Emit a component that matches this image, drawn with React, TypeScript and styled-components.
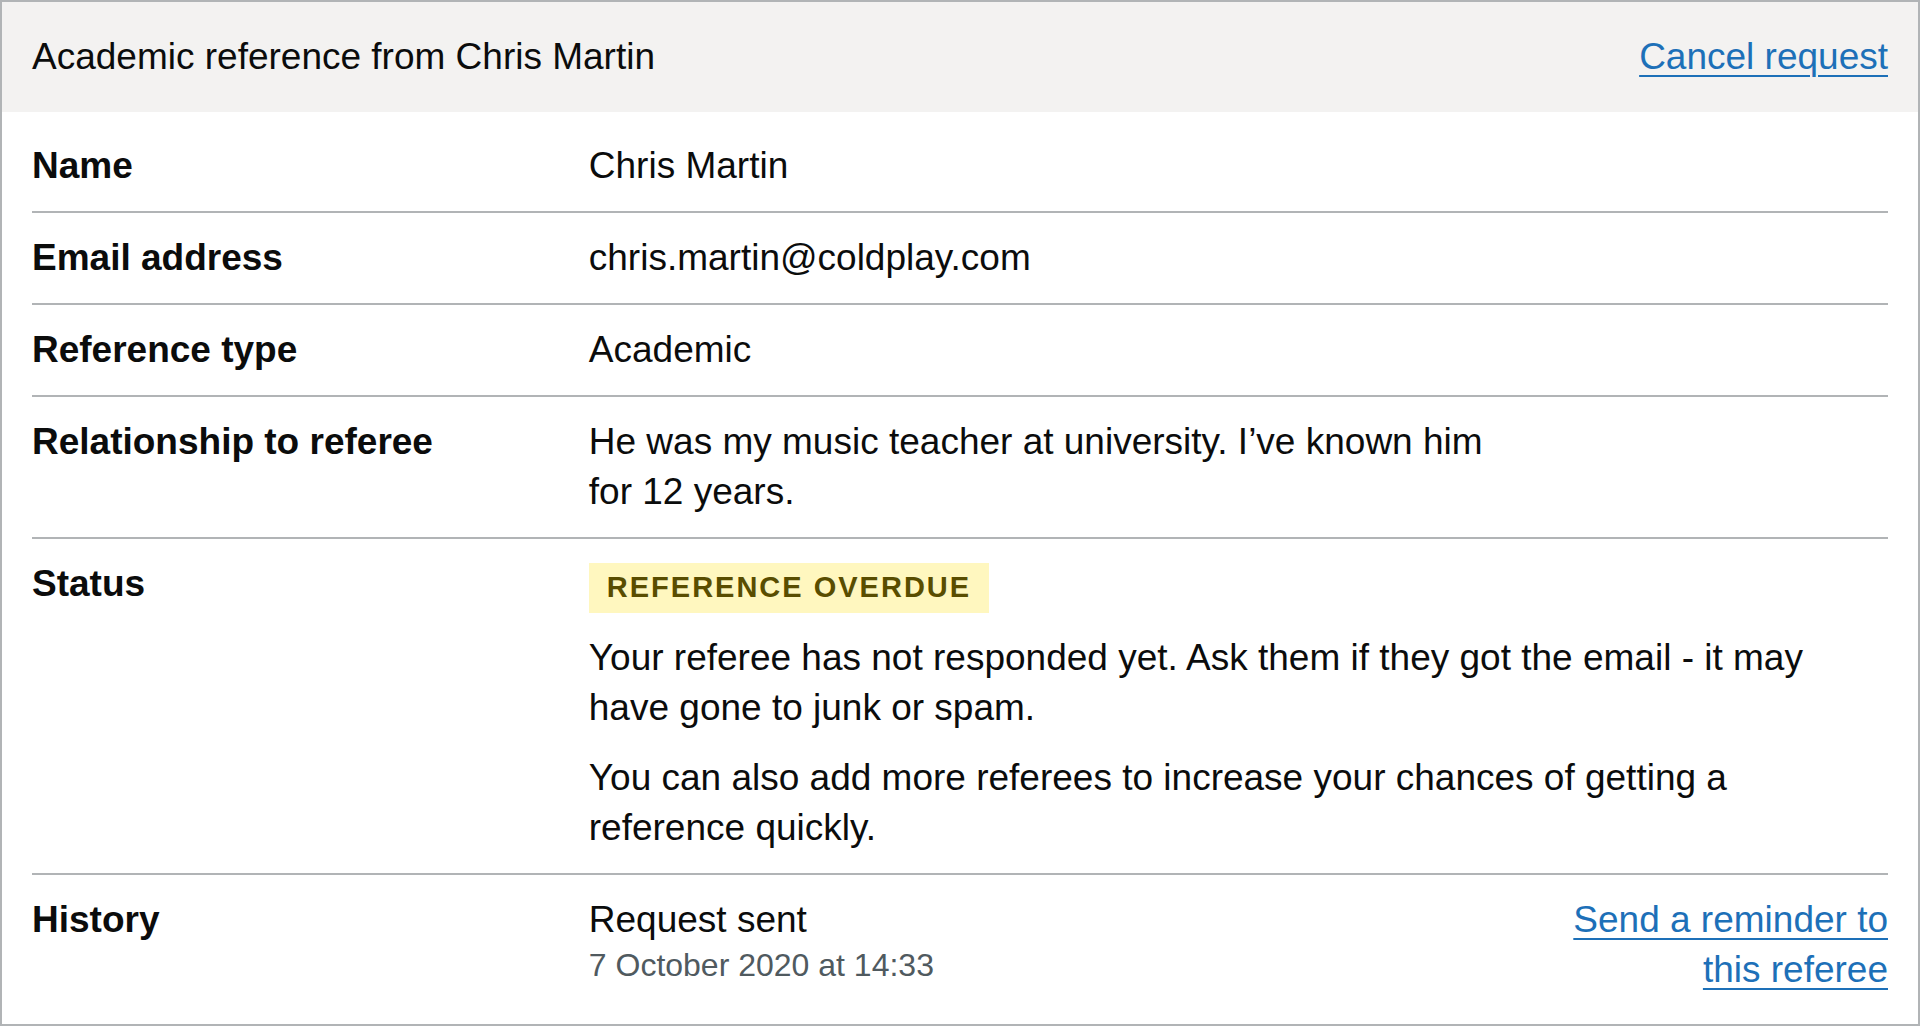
import * as React from 'react';
import styled, { createGlobalStyle } from 'styled-components';

const GlobalStyle = createGlobalStyle`
  html, body {
    margin: 0;
    padding: 0;
    background: #ffffff;
  }
  body {
    font-family: "Liberation Sans", Arial, sans-serif;
    color: #0b0c0c;
    -webkit-font-smoothing: antialiased;
  }
`;

const Card = styled.section`
  border: 2px solid #b1b4b6;
  background: #ffffff;
`;

const CardHeader = styled.header`
  display: flex;
  justify-content: space-between;
  align-items: baseline;
  padding: 30px;
  background: #f3f2f1;
`;

const CardTitle = styled.h2`
  margin: 0;
  font-size: 37px;
  line-height: 50px;
  font-weight: 400;
`;

const Link = styled.a`
  color: #1d70b8;
  font-size: 37px;
  line-height: 50px;
  text-decoration: underline;
  text-decoration-thickness: 2px;
  text-underline-offset: 0.15em;
  cursor: pointer;
`;

const CardContent = styled.div`
  padding: 9px 30px;
`;

const SummaryList = styled.dl`
  margin: 0;
`;

const Row = styled.div<{ $withActions?: boolean }>`
  display: grid;
  grid-template-columns: ${({ $withActions }) => ($withActions ? '30% 1fr 20%' : '30% 1fr')};
  border-bottom: 2px solid #b1b4b6;

  &:last-child {
    border-bottom: none;
  }
`;

const Key = styled.dt`
  padding: 20px 20px 20px 0;
  font-size: 37px;
  line-height: 50px;
  font-weight: 700;
`;

const Value = styled.dd`
  margin: 0;
  padding: 20px 20px 20px 0;
  font-size: 37px;
  line-height: 50px;
`;

const Actions = styled.dd`
  margin: 0;
  padding: 20px 0;
  text-align: right;
  font-size: 37px;
  line-height: 50px;
`;

const Tag = styled.strong`
  display: inline-block;
  margin-top: 4px;
  padding: 8px 18px 10px;
  background: #fff7bf;
  color: #594d00;
  font-size: 29px;
  line-height: 32px;
  font-weight: 700;
  letter-spacing: 2px;
  text-transform: uppercase;
  vertical-align: top;
`;

const Paragraph = styled.p`
  margin: 20px 0 0;
`;

const Hint = styled.span`
  display: block;
  color: #505a5f;
  font-size: 32px;
  line-height: 40px;
`;

const rows = [
  { key: 'Name', value: 'Chris Martin' },
  { key: 'Email address', value: 'chris.martin@coldplay.com' },
  { key: 'Reference type', value: 'Academic' },
];

const App: React.FC = () => {
  return (
    <>
      <GlobalStyle />
      <Card>
        <CardHeader>
          <CardTitle>Academic reference from Chris Martin</CardTitle>
          <Link href="#">Cancel request</Link>
        </CardHeader>
        <CardContent>
          <SummaryList>
            {rows.map((row) => (
              <Row key={row.key}>
                <Key>{row.key}</Key>
                <Value>{row.value}</Value>
              </Row>
            ))}
            <Row $withActions>
              <Key>Relationship to referee</Key>
              <Value>He was my music teacher at university. I’ve known him for 12 years.</Value>
              <Actions />
            </Row>
            <Row>
              <Key>Status</Key>
              <Value>
                <Tag>Reference overdue</Tag>
                <Paragraph>
                  Your referee has not responded yet. Ask them if they got the email - it may have gone to junk or spam.
                </Paragraph>
                <Paragraph>
                  You can also add more referees to increase your chances of getting a reference quickly.
                </Paragraph>
              </Value>
            </Row>
            <Row $withActions>
              <Key>History</Key>
              <Value>
                Request sent
                <Hint>7 October 2020 at 14:33</Hint>
              </Value>
              <Actions>
                <Link href="#">Send a reminder to this referee</Link>
              </Actions>
            </Row>
          </SummaryList>
        </CardContent>
      </Card>
    </>
  );
};

export default App;
